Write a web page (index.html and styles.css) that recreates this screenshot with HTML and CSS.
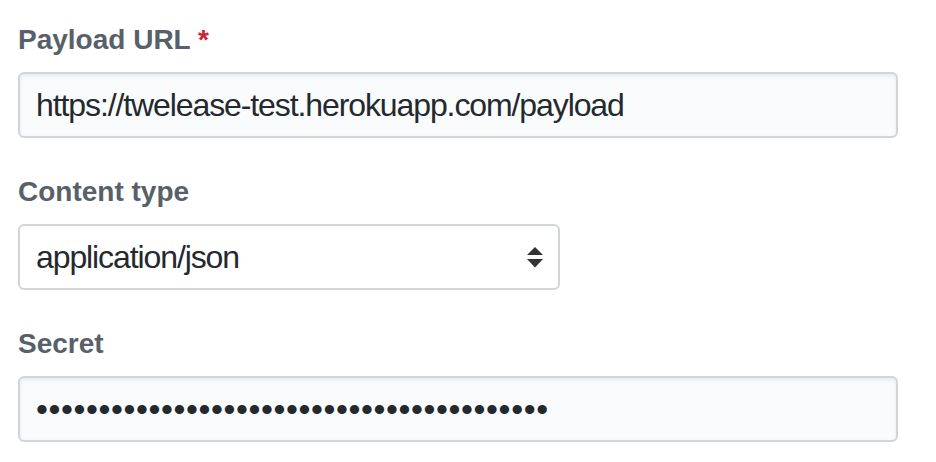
FILE: index.html
```html
<!DOCTYPE html>
<html lang="en">
<head>
<meta charset="utf-8">
<title>Webhook</title>
<link rel="stylesheet" href="styles.css">
</head>
<body>
<form class="form">
  <div class="group">
    <label class="label" for="url">Payload URL <span class="req">*</span></label>
    <input class="control" id="url" type="text" value="https://twelease-test.herokuapp.com/payload">
  </div>
  <div class="group">
    <label class="label" for="ctype">Content type</label>
    <div class="select-wrap">
      <select class="control select" id="ctype">
        <option>application/json</option>
        <option>application/x-www-form-urlencoded</option>
      </select>
      <svg class="select-arrow" width="16" height="21" viewBox="0 0 16 21" aria-hidden="true">
        <path d="M8 0 L16 8 L0 8 Z" fill="#333"/>
        <path d="M0 12 L16 12 L8 20.5 Z" fill="#333"/>
      </svg>
    </div>
  </div>
  <div class="group">
    <label class="label" for="secret">Secret</label>
    <input class="control secret" id="secret" type="password" value="abcdefghijklmnopqrstuvwxyzabcdefghijklmno">
  </div>
</form>
</body>
</html>
```
FILE: styles.css
```css
* { box-sizing: border-box; }
html, body { margin: 0; background: #fff; }
body {
  font-family: "Liberation Sans", Arial, Helvetica, sans-serif;
  color: #24292e;
}
.form {
  padding: 20px 0 0 18px;
  display: flex;
  flex-direction: column;
  gap: 34px;
}
.group {
  display: flex;
  flex-direction: column;
  align-items: flex-start;
}
.label {
  font-size: 28px;
  font-weight: bold;
  line-height: 40px;
  color: #586069;
  margin-bottom: 12px;
}
.req { color: #cb2431; }
.control {
  width: 880px;
  height: 66px;
  margin: 0;
  padding: 0 16px;
  font-family: inherit;
  font-size: 32px;
  letter-spacing: -1.1px;
  color: #24292e;
  background: #fafbfc;
  border: 2px solid #d1d5da;
  border-radius: 6px;
  box-shadow: inset 0 2px 4px rgba(27, 31, 35, 0.075);
  outline: none;
}
.select-wrap {
  position: relative;
  width: 542px;
}
.select {
  width: 542px;
  background: #fff;
  -webkit-appearance: none;
  appearance: none;
  box-shadow: none;
}
.select-arrow {
  position: absolute;
  right: 17px;
  top: 23px;
  pointer-events: none;
}
.secret {
  font-size: 34px;
  letter-spacing: 0.6px;
}
```
